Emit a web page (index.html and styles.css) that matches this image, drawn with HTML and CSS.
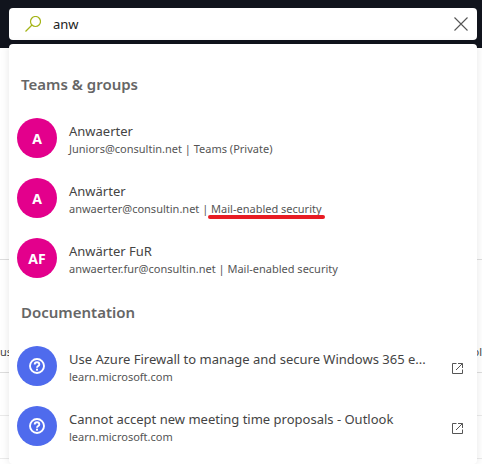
FILE: index.html
```html
<!DOCTYPE html>
<html lang="en">
<head>
<meta charset="utf-8">
<title>Search</title>
<link rel="stylesheet" href="styles.css">
</head>
<body>
<svg class="symbols" aria-hidden="true">
  <symbol id="help" viewBox="0 0 16 16"><g fill="none" stroke="#fff" stroke-width="1.9"><circle cx="8" cy="8" r="7"/><path d="M5.700 6.500c0-1.300 1-2.200 2.300-2.200s2.300.9 2.300 2.100c0 1.600-2.300 1.700-2.300 3.400"/></g><rect x="7" y="10.700" width="2" height="1.900" fill="#fff"/></symbol>
  <symbol id="open" viewBox="0 0 11 11"><g fill="none" stroke="#555"><path d="M4.500 .5H.5v10h10V6.500"/><path d="M6 .5h4.500V5M10.500 .5L4 7"/></g></symbol>
</svg>
<header class="topbar">
  <form class="search" role="search">
    <svg class="search-icon" viewBox="0 0 16 16" aria-hidden="true"><g fill="none" stroke="#a4b416" stroke-width="1.200"><circle cx="10.500" cy="5.500" r="5"/><path d="M7 9L.5 15.500"/></g></svg>
    <input class="search-input" type="text" value="anw" aria-label="Search">
    <button class="clear" type="button" aria-label="Clear search"><svg viewBox="0 0 14 14" aria-hidden="true"><path d="M.5 .5l13 13M13.500 .5l-13 13" fill="none" stroke="#555" stroke-width="1.100"/></svg></button>
  </form>
  <div class="results">
    <section>
      <h2>Teams &amp; groups</h2>
      <ul>
        <li class="item"><span class="avatar">A</span><div class="text"><div class="title">Anwaerter</div><div class="sub">Juniors@consultin.net | Teams (Private)</div></div></li>
        <li class="item"><span class="avatar">A</span><div class="text"><div class="title">Anwärter</div><div class="sub">anwaerter@consultin.net | <span class="marked">Mail-enabled security</span></div></div></li>
        <li class="item"><span class="avatar">AF</span><div class="text"><div class="title">Anwärter FuR</div><div class="sub">anwaerter.fur@consultin.net | Mail-enabled security</div></div></li>
      </ul>
    </section>
    <section>
      <h2>Documentation</h2>
      <ul>
        <li><a class="item" href="#firewall"><span class="avatar doc"><svg aria-hidden="true"><use href="#help"/></svg></span><div class="text"><div class="title">Use Azure Firewall to manage and secure Windows 365 e...</div><div class="sub">learn.microsoft.com</div></div><svg class="open" aria-hidden="true"><use href="#open"/></svg></a></li>
        <li><a class="item" href="#proposals"><span class="avatar doc"><svg aria-hidden="true"><use href="#help"/></svg></span><div class="text"><div class="title">Cannot accept new meeting time proposals - Outlook</div><div class="sub">learn.microsoft.com</div></div><svg class="open" aria-hidden="true"><use href="#open"/></svg></a></li>
      </ul>
    </section>
  </div>
</header>
<main class="page">
  <div class="toolbar"></div>
  <div class="columns"><span>us</span><span>ol</span></div>
  <div class="row"></div>
  <div class="row"></div>
</main>
</body>
</html>
```
FILE: styles.css
```css
* { box-sizing: border-box; }
body {
  min-height: 100vh;
  margin: 0;
  background: #fff;
  color: #444;
  font-family: "Segoe UI", "Noto Sans", sans-serif;
  font-size: 13px;
}
.symbols { display: none; }
.topbar {
  position: relative;
  height: 48px;
  padding: 8px 5px 0 9px;
  background: #11141d;
}
.search {
  display: flex;
  align-items: center;
  height: 32px;
  padding: 0 9px 0 16px;
  background: #fff;
  border-radius: 4px;
}
.search-icon { width: 16px; height: 16px; flex: none; }
.search-input {
  flex: 1;
  min-width: 0;
  margin-left: 12px;
  padding: 0;
  border: 0;
  outline: 0;
  background: none;
  color: #222;
  font: inherit;
}
.clear {
  display: flex;
  padding: 0;
  border: 0;
  background: none;
}
.clear svg { width: 14px; height: 14px; }
.results {
  position: absolute;
  z-index: 1;
  top: 44px;
  left: 9px;
  right: 5px;
  padding: 16px 0 8px;
  background: #fff;
  border-radius: 4px;
  box-shadow: 0 0 8px rgba(0, 0, 0, 0.1);
}
h2 {
  margin: 0;
  padding: 0 12px;
  color: #666;
  font-size: 15px;
  font-weight: 600;
  line-height: 48px;
}
ul { margin: 0; padding: 0; list-style: none; }
.item {
  display: flex;
  align-items: center;
  height: 60px;
  padding: 0 14px 0 8px;
  color: inherit;
  text-decoration: none;
}
.avatar {
  display: flex;
  flex: none;
  align-items: center;
  justify-content: center;
  width: 40px;
  height: 40px;
  border-radius: 50%;
  background: #e3008c;
  color: #fff;
  font-size: 14px;
  font-weight: 700;
}
.doc { background: #4f6bed; }
.doc svg { width: 16px; height: 16px; }
.text { flex: 1; min-width: 0; padding: 2px 0 0 12px; white-space: nowrap; }
.title { line-height: 20px; }
.sub { color: #555; font-size: 11px; line-height: 16px; }
.marked { position: relative; }
.marked::after {
  content: "";
  position: absolute;
  left: -3px;
  right: -3px;
  bottom: -3px;
  height: 4px;
  border-radius: 2px;
  background: #e81c23;
}
.open { width: 11px; height: 11px; flex: none; margin-top: 4px; }
.toolbar { height: 212px; border-bottom: 1px solid #ddd; }
.columns {
  display: flex;
  align-items: flex-end;
  justify-content: space-between;
  height: 113px;
  padding-bottom: 12px;
  border-bottom: 1px solid #ddd;
  font-size: 11px;
  line-height: 16px;
}
.row { height: 43px; border-bottom: 1px solid #eaeaea; }
```
